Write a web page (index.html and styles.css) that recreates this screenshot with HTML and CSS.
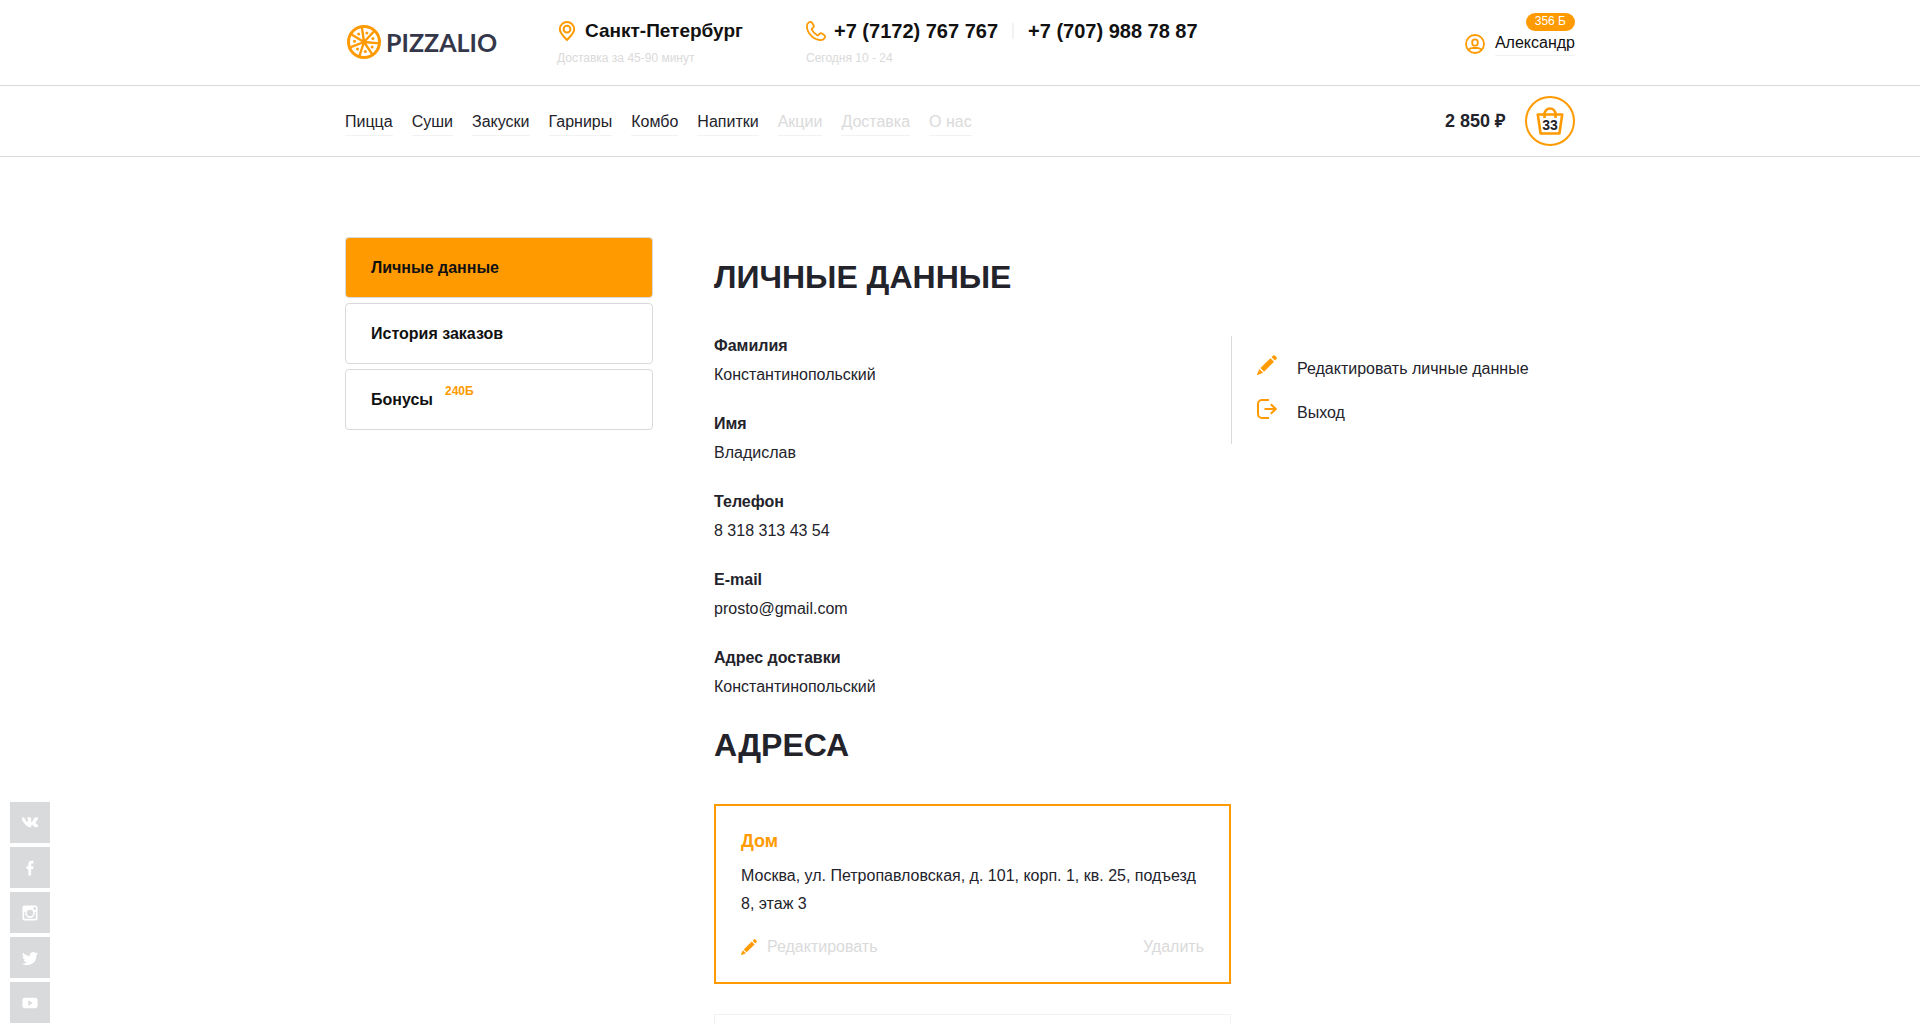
FILE: index.html
```html
<!DOCTYPE html>
<html lang="ru">
<head>
<meta charset="utf-8">
<meta name="viewport" content="width=device-width, initial-scale=1">
<title>Pizzalio — Личные данные</title>
<link rel="stylesheet" href="styles.css">
</head>
<body>
<svg class="sprite" aria-hidden="true">
  <symbol id="pencil" viewBox="0 0 20 20">
    <path d="M13.400 3.200l3.600 3.600L7 16.700 3.400 13.100z"/>
    <path d="M14.500 2.100L15.900.8c.7-.7 1.500-.7 2.100-.1l1.400 1.400c.6.6.6 1.400-.1 2.100L18 5.600z"/>
    <path d="M2.400 14l3.700 3.700-5.400 2.200c-.4.100-.8-.3-.6-.7z"/>
  </symbol>
</svg>

<header class="header">
  <div class="container topbar">
    <a class="logo" href="#">
      <svg width="34" height="36" viewBox="0 0 34 36" fill="none" stroke="#ff9a00" aria-hidden="true">
        <circle cx="17" cy="18" r="15.500" stroke-width="3"/>
        <path d="M17 18L14.800 2.700M17 18L27.600 6.700M17 18l15.400 1.400M17 18l8.700 12.900M17 18l-4.800 14.700M17 18L2.500 23.600M17 18L3.700 10" stroke-width="2.400"/>
        <g fill="#ff9a00" stroke="none">
          <circle cx="19.900" cy="9" r="1.500"/><circle cx="25.900" cy="14.600" r="1.500"/><circle cx="25.100" cy="22.900" r="1.500"/><circle cx="18.300" cy="27.400" r="1.500"/><circle cx="10.500" cy="24.900" r="1.500"/><circle cx="7.500" cy="17.200" r="1.500"/><circle cx="11.700" cy="10.100" r="1.500"/>
        </g>
      </svg>
      <span class="logo-text">PIZZALIO</span>
    </a>
    <div class="info city">
      <a class="info-main" href="#">
        <svg width="20" height="20" viewBox="0 0 20 20" fill="none" stroke="#ff9a00" stroke-width="2" aria-hidden="true">
          <path d="M10 19C8 16.500 2.800 12.400 2.800 8.200a7.200 7.200 0 0 1 14.400 0c0 4.200-5.200 8.300-7.200 10.800z"/><circle cx="10" cy="8.200" r="3.400"/>
        </svg>
        <span>Санкт-Петербург</span>
      </a>
      <p class="info-note">Доставка за 45-90 минут</p>
    </div>
    <div class="info phones">
      <div class="info-main">
        <svg width="20" height="20" viewBox="0 0 20 20" fill="none" stroke="#ff9a00" stroke-width="1.800" stroke-linejoin="round" aria-hidden="true">
          <path d="M3.200 1.200C1.500 2 .8 3.700.9 5.500c.4 6.800 6.500 13 13.300 13.600 1.800.1 3.600-.5 4.500-2.200.7-1.300.3-2.400-.9-3.200l-1.700-1.100c-1-.6-2-.4-2.700.4l-.8 1c-.4.5-.9.500-1.400.2a15 15 0 0 1-5.300-5.300c-.3-.5-.2-1 .2-1.400l1-.8c.8-.7.9-1.700.3-2.700L6.300 2.100C5.500.9 4.500.6 3.200 1.200z"/>
        </svg>
        <span class="numbers">
          <a href="tel:+77172767767">+7 (7172) 767 767</a>
          <span class="phone-divider"></span>
          <a href="tel:+77079887887">+7 (707) 988 78 87</a>
        </span>
      </div>
      <p class="info-note">Сегодня 10 - 24</p>
    </div>
    <div class="account">
      <span class="badge">356 Б</span>
      <a class="account-link" href="#">
        <svg width="20" height="20" viewBox="0 0 20 20" fill="none" stroke="#ff9a00" stroke-width="1.800" aria-hidden="true">
          <circle cx="10" cy="10" r="9"/><rect x="7.200" y="5.300" width="5.600" height="6.400" rx="2.800"/><path d="M3.500 15.600c1.300-1.200 3.200-1.600 4.600-1.600h3.800c1.400 0 3.300.4 4.600 1.600"/>
        </svg>
        <span>Александр</span>
      </a>
    </div>
  </div>
</header>

<div class="navbar">
  <div class="container navbar-inner">
    <nav class="menu">
      <a href="#">Пицца</a>
      <a href="#">Суши</a>
      <a href="#">Закуски</a>
      <a href="#">Гарниры</a>
      <a href="#">Комбо</a>
      <a href="#">Напитки</a>
      <a class="muted" href="#">Акции</a>
      <a class="muted" href="#">Доставка</a>
      <a class="muted" href="#">О нас</a>
    </nav>
    <div class="cart">
      <span class="cart-sum">2 850 ₽</span>
      <a class="cart-button" href="#" aria-label="Корзина, 33 товара">
        <svg width="28" height="28" viewBox="0 0 28 28" fill="none" stroke="#ff9a00" stroke-width="2.600" stroke-linejoin="round" aria-hidden="true">
          <path d="M1.800 7.500h24.400l-2.800 19H4.600z"/><path d="M8.500 11V7.500C8.500 4 11 1.500 14 1.500S19.500 4 19.500 7.500V11"/>
        </svg>
        <span class="cart-count">33</span>
      </a>
    </div>
  </div>
</div>

<main class="container page">
  <aside class="sidebar">
    <a class="side-link active" href="#">Личные данные</a>
    <a class="side-link" href="#">История заказов</a>
    <a class="side-link" href="#">Бонусы <span class="bonus">240Б</span></a>
  </aside>
  <div class="content">
    <h1>Личные данные</h1>
    <div class="profile">
      <dl class="fields">
        <div><dt>Фамилия</dt><dd>Константинопольский</dd></div>
        <div><dt>Имя</dt><dd>Владислав</dd></div>
        <div><dt>Телефон</dt><dd>8 318 313 43 54</dd></div>
        <div><dt>E-mail</dt><dd>prosto@gmail.com</dd></div>
        <div><dt>Адрес доставки</dt><dd>Константинопольский</dd></div>
      </dl>
      <div class="actions">
        <a href="#"><svg width="20" height="20" fill="#ff9a00" aria-hidden="true"><use href="#pencil"/></svg><span>Редактировать личные данные</span></a>
        <a href="#"><svg width="20" height="20" viewBox="0 0 20 20" fill="none" stroke="#ff9a00" stroke-width="2" aria-hidden="true"><path d="M12 1H5a4 4 0 0 0-4 4v10a4 4 0 0 0 4 4h7"/><path d="M7.500 10H19M13.800 5.300L18.700 10l-4.900 4.700"/></svg><span>Выход</span></a>
      </div>
    </div>
    <h2>Адреса</h2>
    <section class="address selected">
      <h3>Дом</h3>
      <p>Москва, ул. Петропавловская, д. 101, корп. 1, кв. 25, подъезд 8, этаж 3</p>
      <div class="address-actions">
        <button type="button"><svg width="16" height="16" fill="#ff9a00" aria-hidden="true"><use href="#pencil"/></svg>Редактировать</button>
        <button type="button">Удалить</button>
      </div>
    </section>
    <section class="address"></section>
  </div>
</main>

<div class="social">
  <a href="#" aria-label="ВКонтакте"><svg width="16" height="16" viewBox="0 0 16 16"><path d="M7.700 12.200h1s.3 0 .4-.2c.2-.2.100-.5.100-.5s0-1.500.7-1.700c.7-.2 1.500 1.400 2.400 2 .7.500 1.200.4 1.200.4l2.300-.1s1.200-.1.600-1c0-.1-.3-.8-1.800-2.100-1.500-1.400-1.300-1.200.5-3.600 1.100-1.500 1.500-2.300 1.400-2.700-.1-.4-1-.3-1-.3h-2.600c-.4 0-.6.300-.7.500 0 0-.4 1.100-1 2C10 6.900 9.600 7 9.400 6.900c-.4-.3-.3-1.100-.3-1.700 0-1.800.3-2.600-.5-2.800-.3-.1-.5-.1-1.200-.1-.9 0-1.700 0-2.100.2-.3.100-.5.500-.4.500.2 0 .5.100.7.400.3.300.2 1.100.2 1.100s.2 2.200-.3 2.500c-.4.200-.9-.2-2-2.100-.5-.9-1-2-1-2s-.2-.5-.8-.5H-.300s-.7.100-.5.700c0 0 1.900 4.400 4.100 6.700 2 2.100 4.300 2.400 4.400 2.400z"/></svg></a>
  <a href="#" aria-label="Facebook"><svg width="16" height="16" viewBox="0 0 16 16"><path d="M6.300 15.500V9H4.500V6.200h1.800V4.300C6.300 1.900 7.600.8 9.700.8h1.800v2.700h-1.200c-.9 0-1.200.4-1.200 1.200v1.500h2.400L11.200 9H9.100v6.500z"/></svg></a>
  <a href="#" aria-label="Instagram"><svg width="16" height="16" viewBox="0 0 16 16"><path fill-rule="evenodd" d="M2.500.5h11a2 2 0 0 1 2 2v11a2 2 0 0 1-2 2h-11a2 2 0 0 1-2-2v-11a2 2 0 0 1 2-2zM11.500 2.200v2.500H14V2.200zM2.200 6.700v6.300c0 .5.300.8.800.8h10c.5 0 .8-.3.800-.8V6.700h-1.300A4.800 4.800 0 1 1 3.400 6.700zM8 4.800a3.200 3.200 0 1 0 0 6.400 3.200 3.200 0 0 0 0-6.400z"/></svg></a>
  <a href="#" aria-label="Twitter"><svg width="16" height="16" viewBox="0 0 16 16"><path d="M16 3.500c-.6.300-1.200.4-1.900.5.700-.4 1.200-1 1.400-1.800-.6.400-1.300.6-2.100.8a3.300 3.300 0 0 0-5.600 3C5.100 5.900 2.700 4.600 1.100 2.700a3.300 3.300 0 0 0 1 4.300c-.5 0-1-.1-1.500-.4 0 1.600 1.100 2.900 2.600 3.300-.5.100-1 .1-1.500 0 .4 1.300 1.600 2.200 3.100 2.300A6.600 6.600 0 0 1 0 13.500a9.300 9.300 0 0 0 14.400-8.300c.6-.5 1.200-1 1.600-1.700z"/></svg></a>
  <a href="#" aria-label="YouTube"><svg width="16" height="16" viewBox="0 0 16 16"><path fill-rule="evenodd" d="M3 2.800h10c1.800 0 2.600.9 2.600 2.600v5.200c0 1.700-.8 2.600-2.600 2.600H3c-1.800 0-2.600-.9-2.600-2.600V5.400C.4 3.700 1.200 2.800 3 2.800zM6.300 5.300v5.400L10.700 8z"/></svg></a>
</div>
</body>
</html>
```
FILE: styles.css
```css
* { box-sizing: border-box; }

html { overflow-y: auto; scrollbar-width: none; }

body {
  margin: 0;
  font: 16px/28px "Liberation Sans", Arial, sans-serif;
  color: #23232b;
  background: #fff;
}

a { color: inherit; text-decoration: none; }
h1, h2, h3, p, dl, dd { margin: 0; }
svg { flex: none; display: block; }
.sprite { position: absolute; width: 0; height: 0; }

.container {
  max-width: 1230px;
  margin: 0 auto;
}

/* Header */
.header { border-bottom: 1px solid #dadada; }

.topbar {
  display: flex;
  align-items: flex-start;
  height: 85px;
  padding-top: 12px;
}

.logo {
  display: flex;
  align-items: center;
  gap: 5px;
  width: 212px;
  padding: 12px 0 0 2px;
}

.logo-text {
  font: bold 25px/36px Lato, "Liberation Sans", sans-serif;
  color: #34374a;
}

.info-main {
  display: flex;
  align-items: center;
  gap: 8px;
  font-size: 19px;
  line-height: 38px;
  font-weight: bold;
  height: 38px;
  color: #111;
}

.info-note { font-size: 12px; line-height: 16px; color: #dadada; }
.city { width: 249px; }
.numbers { display: flex; align-items: center; gap: 14px; font-size: 20px; }
.phone-divider { width: 2px; height: 16px; background: #f2f2f2; }

.account {
  display: flex;
  flex-direction: column;
  align-items: flex-end;
  margin-left: auto;
  padding-top: 1px;
  color: #111;
}

.badge {
  height: 18px;
  padding: 0 9px;
  border-radius: 9px;
  background: #ff9a00;
  color: #fff;
  font-size: 12px;
  line-height: 16px;
}

.account-link { display: flex; align-items: center; gap: 10px; line-height: 24px; }
.account-link span { border-bottom: 1px solid #f2f2f2; }

/* Navigation */
.navbar { border-bottom: 1px solid #dadada; }

.navbar-inner {
  display: flex;
  align-items: center;
  justify-content: space-between;
  height: 70px;
}

.menu { display: flex; gap: 19px; }
.menu a { padding-top: 2px; line-height: 27px; border-bottom: 1px solid #f2f2f2; }
.menu .muted { color: #dadada; }

.cart { display: flex; align-items: center; gap: 20px; }
.cart-sum { font-size: 18px; font-weight: bold; }

.cart-button {
  position: relative;
  display: flex;
  align-items: center;
  justify-content: center;
  width: 50px;
  height: 50px;
  border: 2px solid #ff9a00;
  border-radius: 50%;
}

.cart-count {
  position: absolute;
  inset: 0;
  top: 5px;
  text-align: center;
  font-size: 14px;
  line-height: 44px;
  font-weight: bold;
}

/* Account page */
.page {
  display: grid;
  grid-template-columns: 308px 1fr;
  gap: 61px;
  padding: 80px 0;
}

.sidebar { display: flex; flex-direction: column; gap: 5px; }

.side-link {
  display: flex;
  gap: 12px;
  padding: 16px 25px 15px;
  border: 1px solid #dadada;
  border-radius: 4px;
  font-weight: bold;
  color: #111;
}

.side-link.active { background: #ff9a00; }
.bonus { font-size: 12px; line-height: 10px; color: #ff9a00; }

h1, h2 {
  font-size: 32px;
  line-height: 40px;
  text-transform: uppercase;
}

h1 { margin-top: 20px; }
h2 { margin: 24px 0 39px; }

.profile {
  display: grid;
  grid-template-columns: 517px 1fr;
  align-items: start;
  margin-top: 34px;
}

.fields { display: flex; flex-direction: column; gap: 20px; }
.fields dt { font-weight: bold; }
.fields div { display: grid; line-height: 29px; }

.actions {
  display: flex;
  flex-direction: column;
  gap: 16px;
  height: 108px;
  margin-top: 5px;
  padding: 19px 25px;
  border-left: 1px solid #dadada;
}

.actions a { display: flex; gap: 20px; }

.address {
  max-width: 517px;
  min-height: 180px;
  margin-bottom: 30px;
  padding: 22px 26px;
  border: 1px solid #f2f2f2;
}

.address.selected { border: 2px solid #ff9a00; padding: 21px 25px; }
.address h3 { font-size: 18px; line-height: 28px; margin-bottom: 7px; color: #ff9a00; }
.address-actions { display: flex; justify-content: space-between; margin-top: 15px; }

.address button {
  display: flex;
  align-items: center;
  gap: 10px;
  padding: 0;
  border: 0;
  background: none;
  font: inherit;
  color: #dadada;
}

/* Social links pinned to the window corner */
.social {
  position: fixed;
  left: 10px;
  bottom: 1px;
  display: flex;
  flex-direction: column;
  gap: 4px;
}

.social a {
  display: flex;
  align-items: center;
  justify-content: center;
  width: 40px;
  height: 41px;
  background: #d9dadb;
  fill: #fff;
}
```
